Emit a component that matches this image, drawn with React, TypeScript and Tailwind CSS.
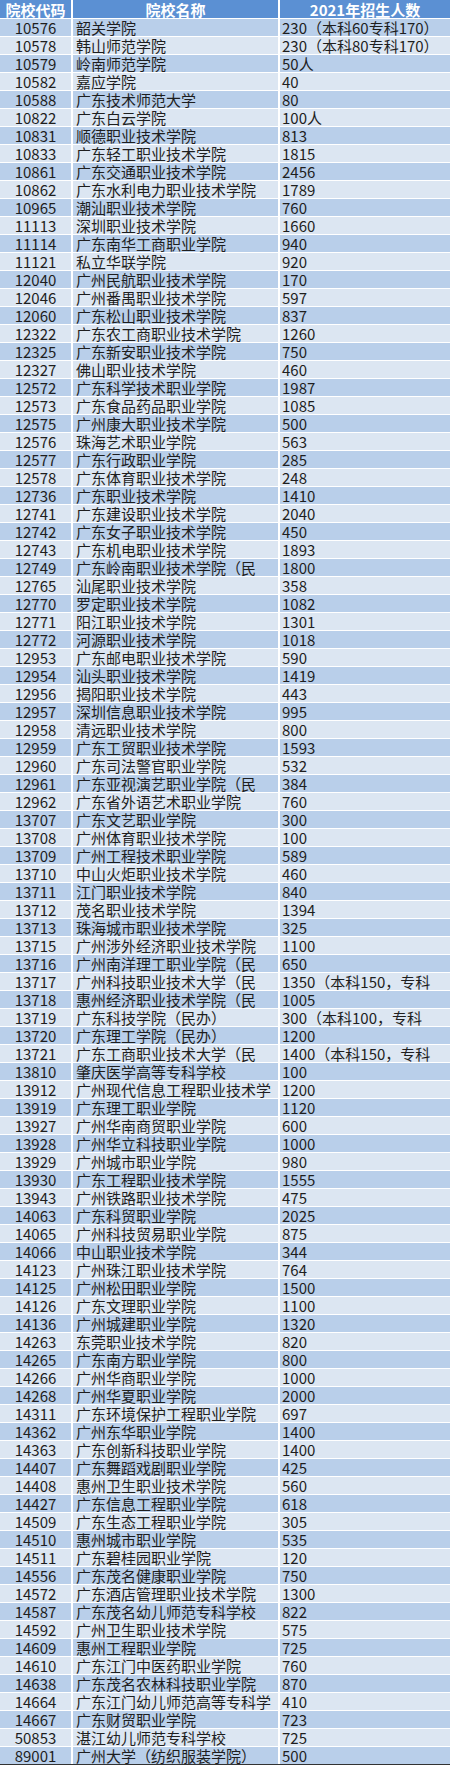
const rows: [string, string, string][] = [
  ["10576", "韶关学院", "230（本科60专科170）"],
  ["10578", "韩山师范学院", "230（本科80专科170）"],
  ["10579", "岭南师范学院", "50人"],
  ["10582", "嘉应学院", "40"],
  ["10588", "广东技术师范大学", "80"],
  ["10822", "广东白云学院", "100人"],
  ["10831", "顺德职业技术学院", "813"],
  ["10833", "广东轻工职业技术学院", "1815"],
  ["10861", "广东交通职业技术学院", "2456"],
  ["10862", "广东水利电力职业技术学院", "1789"],
  ["10965", "潮汕职业技术学院", "760"],
  ["11113", "深圳职业技术学院", "1660"],
  ["11114", "广东南华工商职业学院", "940"],
  ["11121", "私立华联学院", "920"],
  ["12040", "广州民航职业技术学院", "170"],
  ["12046", "广州番禺职业技术学院", "597"],
  ["12060", "广东松山职业技术学院", "837"],
  ["12322", "广东农工商职业技术学院", "1260"],
  ["12325", "广东新安职业技术学院", "750"],
  ["12327", "佛山职业技术学院", "460"],
  ["12572", "广东科学技术职业学院", "1987"],
  ["12573", "广东食品药品职业学院", "1085"],
  ["12575", "广州康大职业技术学院", "500"],
  ["12576", "珠海艺术职业学院", "563"],
  ["12577", "广东行政职业学院", "285"],
  ["12578", "广东体育职业技术学院", "248"],
  ["12736", "广东职业技术学院", "1410"],
  ["12741", "广东建设职业技术学院", "2040"],
  ["12742", "广东女子职业技术学院", "450"],
  ["12743", "广东机电职业技术学院", "1893"],
  ["12749", "广东岭南职业技术学院（民", "1800"],
  ["12765", "汕尾职业技术学院", "358"],
  ["12770", "罗定职业技术学院", "1082"],
  ["12771", "阳江职业技术学院", "1301"],
  ["12772", "河源职业技术学院", "1018"],
  ["12953", "广东邮电职业技术学院", "590"],
  ["12954", "汕头职业技术学院", "1419"],
  ["12956", "揭阳职业技术学院", "443"],
  ["12957", "深圳信息职业技术学院", "995"],
  ["12958", "清远职业技术学院", "800"],
  ["12959", "广东工贸职业技术学院", "1593"],
  ["12960", "广东司法警官职业学院", "532"],
  ["12961", "广东亚视演艺职业学院（民", "384"],
  ["12962", "广东省外语艺术职业学院", "760"],
  ["13707", "广东文艺职业学院", "300"],
  ["13708", "广州体育职业技术学院", "100"],
  ["13709", "广州工程技术职业学院", "589"],
  ["13710", "中山火炬职业技术学院", "460"],
  ["13711", "江门职业技术学院", "840"],
  ["13712", "茂名职业技术学院", "1394"],
  ["13713", "珠海城市职业技术学院", "325"],
  ["13715", "广州涉外经济职业技术学院", "1100"],
  ["13716", "广州南洋理工职业学院（民", "650"],
  ["13717", "广州科技职业技术大学（民", "1350（本科150，专科"],
  ["13718", "惠州经济职业技术学院（民", "1005"],
  ["13719", "广东科技学院（民办）", "300（本科100，专科"],
  ["13720", "广东理工学院（民办）", "1200"],
  ["13721", "广东工商职业技术大学（民", "1400（本科150，专科"],
  ["13810", "肇庆医学高等专科学校", "100"],
  ["13912", "广州现代信息工程职业技术学", "1200"],
  ["13919", "广东理工职业学院", "1120"],
  ["13927", "广州华南商贸职业学院", "600"],
  ["13928", "广州华立科技职业学院", "1000"],
  ["13929", "广州城市职业学院", "980"],
  ["13930", "广东工程职业技术学院", "1555"],
  ["13943", "广州铁路职业技术学院", "475"],
  ["14063", "广东科贸职业学院", "2025"],
  ["14065", "广州科技贸易职业学院", "875"],
  ["14066", "中山职业技术学院", "344"],
  ["14123", "广州珠江职业技术学院", "764"],
  ["14125", "广州松田职业学院", "1500"],
  ["14126", "广东文理职业学院", "1100"],
  ["14136", "广州城建职业学院", "1320"],
  ["14263", "东莞职业技术学院", "820"],
  ["14265", "广东南方职业学院", "800"],
  ["14266", "广州华商职业学院", "1000"],
  ["14268", "广州华夏职业学院", "2000"],
  ["14311", "广东环境保护工程职业学院", "697"],
  ["14362", "广州东华职业学院", "1400"],
  ["14363", "广东创新科技职业学院", "1400"],
  ["14407", "广东舞蹈戏剧职业学院", "425"],
  ["14408", "惠州卫生职业技术学院", "560"],
  ["14427", "广东信息工程职业学院", "618"],
  ["14509", "广东生态工程职业学院", "305"],
  ["14510", "惠州城市职业学院", "535"],
  ["14511", "广东碧桂园职业学院", "120"],
  ["14556", "广东茂名健康职业学院", "750"],
  ["14572", "广东酒店管理职业技术学院", "1300"],
  ["14587", "广东茂名幼儿师范专科学校", "822"],
  ["14592", "广州卫生职业技术学院", "575"],
  ["14609", "惠州工程职业学院", "725"],
  ["14610", "广东江门中医药职业学院", "760"],
  ["14638", "广东茂名农林科技职业学院", "870"],
  ["14664", "广东江门幼儿师范高等专科学", "410"],
  ["14667", "广东财贸职业学院", "723"],
  ["50853", "湛江幼儿师范专科学校", "725"],
  ["89001", "广州大学（纺织服装学院）", "500"],
];

const font = { fontFamily: '"Noto Sans CJK SC", "Noto Sans", sans-serif' };

export default function App() {
  return (
    <div className="w-[450px] bg-white flex flex-col gap-px text-[15px] leading-none" style={font}>
      {/* header */}
      <div className="flex gap-[2px] h-[18px] font-bold text-white">
        <div className="w-[71px] bg-[#5b90d3] flex items-center justify-center">院校代码</div>
        <div className="w-[205px] bg-[#5b90d3] flex items-center justify-center">院校名称</div>
        <div className="flex-1 bg-[#5b90d3] flex items-center justify-center">2021年招生人数</div>
      </div>
      {rows.map(([code, name, count], i) => {
        const bg = i % 2 === 0 ? "bg-[#b9cfea]" : "bg-[#dce6f2]";
        const last = i === rows.length - 1;
        return (
          <div
            key={code}
            className={`flex gap-[2px] h-[17px] text-[#1e1e1e] ${last ? "border-b border-[#333333] box-content" : ""}`}
          >
            <div className={`w-[71px] ${bg} flex items-center justify-center`}>{code}</div>
            <div className={`w-[205px] ${bg} flex items-center pl-[3px] whitespace-nowrap`}>{name}</div>
            <div className={`flex-1 ${bg} flex items-center pl-[2px] whitespace-nowrap`}>{count}</div>
          </div>
        );
      })}
    </div>
  );
}
